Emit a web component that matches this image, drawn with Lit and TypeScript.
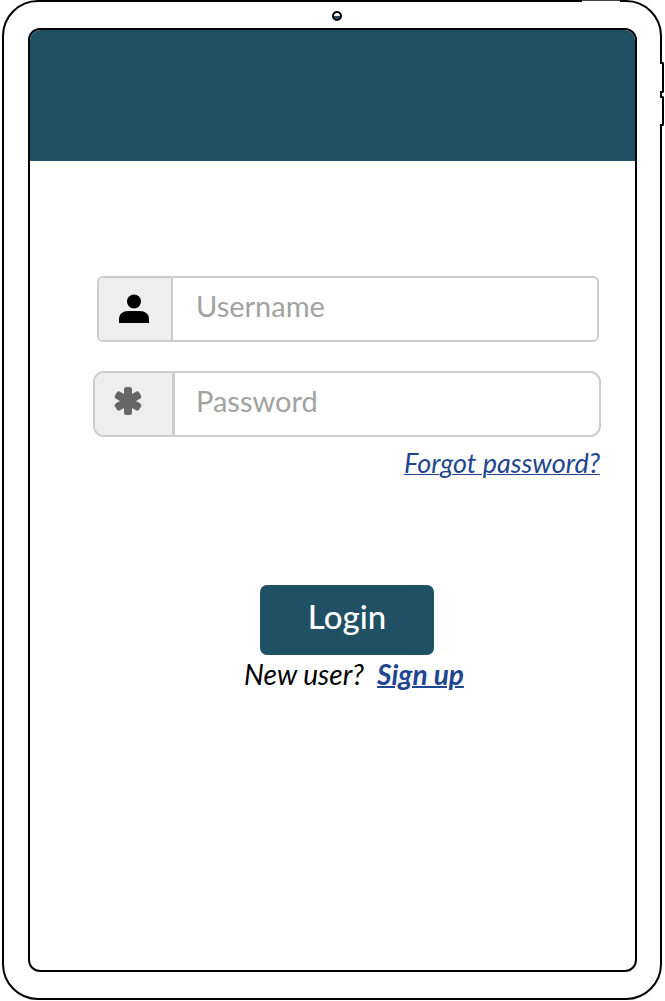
import { css, html, LitElement } from 'lit';
import { customElement } from 'lit/decorators.js';

@customElement('app-root')
export class AppRoot extends LitElement {
  static styles = css`
    :host {
      display: block;
      width: 665px;
      height: 1001px;
      background: #fff;
      font-family: Lato, 'Noto Sans', sans-serif;
    }
    .device {
      position: relative;
      box-sizing: border-box;
      width: 660px;
      height: 1000px;
      margin-left: 2px;
      padding: 26px 23px 26px 24px;
      border: 2px solid #000;
      border-radius: 36px;
    }
    .power {
      position: absolute;
      top: -2px;
      right: 40px;
      box-sizing: border-box;
      width: 38px;
      height: 2px;
      background: #fff;
      border-top: 1px solid #444;
    }
    .volume {
      position: absolute;
      right: -4px;
      box-sizing: border-box;
      width: 4px;
      background: #fff;
      border: 2px solid #000;
      border-left: none;
      border-radius: 0 2px 2px 0;
    }
    .volume.up {
      top: 60px;
      height: 31px;
    }
    .volume.down {
      top: 94px;
      height: 30px;
    }
    .camera {
      position: absolute;
      top: 9px;
      left: 328px;
      box-sizing: border-box;
      width: 10px;
      height: 10px;
      border: 2px solid #000;
      border-radius: 50%;
      background: linear-gradient(#fff 50%, #1f5064 50%);
    }
    .screen {
      box-sizing: border-box;
      height: 944px;
      border: 2px solid #000;
      border-radius: 12px;
      overflow: hidden;
    }
    .header {
      height: 131px;
      background: #205064;
    }
    .form {
      display: flex;
      flex-direction: column;
      align-items: center;
      width: 508px;
      margin-left: 63px;
      padding-top: 115px;
    }
    .field {
      display: flex;
      box-sizing: border-box;
      height: 66px;
      border: 2px solid #ccc;
      background: #fff;
      overflow: hidden;
    }
    .field.user {
      width: 502px;
      margin-left: 2px;
      border-radius: 6px;
    }
    .field.pass {
      width: 508px;
      margin-top: 29px;
      border-radius: 11px;
    }
    .addon {
      display: flex;
      align-items: center;
      justify-content: center;
      box-sizing: border-box;
      background: #eee;
      border-right: 2px solid #ccc;
    }
    .user .addon {
      width: 74px;
      padding-right: 2px;
    }
    .pass .addon {
      width: 80px;
      border-right-width: 3px;
      padding: 0 12px 6px 0;
    }
    input {
      flex: 1;
      min-width: 0;
      border: none;
      outline: none;
      background: transparent;
      font: 400 29px Lato, 'Noto Sans', sans-serif;
      color: #333;
      padding: 0 0 8px 23px;
    }
    .pass input {
      padding-left: 21px;
    }
    input::placeholder {
      color: #a2a2a2;
      opacity: 1;
    }
    a {
      color: #1f4690;
      text-decoration: underline;
      text-decoration-thickness: 1px;
      font-style: italic;
    }
    .forgot {
      align-self: flex-end;
      margin: 8px 1px 0 0;
      font-size: 27px;
      line-height: 36px;
    }
    .login {
      box-sizing: border-box;
      width: 174px;
      height: 70px;
      margin-top: 104px;
      border: none;
      border-radius: 7px;
      background: #205064;
      color: #fff;
      font: 500 33px Lato, 'Noto Sans', sans-serif;
      padding: 0 0 9px;
    }
    .signup {
      margin: 1px 0 0 14px;
      font-size: 28px;
      line-height: 36px;
      font-style: italic;
      color: #000;
      white-space: pre;
    }
    .signup a {
      font-weight: 700;
      text-decoration-thickness: 2px;
    }
  `;

  render() {
    return html`
      <div class="device">
        <span class="power"></span>
        <span class="volume up"></span>
        <span class="volume down"></span>
        <span class="camera"></span>
        <div class="screen">
          <div class="header"></div>
          <div class="form">
            <div class="field user">
              <span class="addon">
                <svg width="32" height="32" viewBox="0 0 32 32">
                  <circle cx="16" cy="8.5" r="7" fill="#000" />
                  <path d="M1 30v-4c0-5 4-8 9-8h12c5 0 9 3 9 8v4z" fill="#000" />
                </svg>
              </span>
              <input type="text" placeholder="Username" />
            </div>
            <div class="field pass">
              <span class="addon">
                <svg width="30" height="28" viewBox="0 0 30 28">
                  <g fill="#666">
                    <rect x="11" y="0" width="8" height="28" rx="2.5" />
                    <rect x="11" y="0" width="8" height="28" rx="2.5" transform="rotate(60 15 14)" />
                    <rect x="11" y="0" width="8" height="28" rx="2.5" transform="rotate(-60 15 14)" />
                  </g>
                </svg>
              </span>
              <input type="password" placeholder="Password" />
            </div>
            <a class="forgot" href="#">Forgot password?</a>
            <button class="login">Login</button>
            <div class="signup">New user?  <a href="#">Sign up</a></div>
          </div>
        </div>
      </div>
    `;
  }
}
